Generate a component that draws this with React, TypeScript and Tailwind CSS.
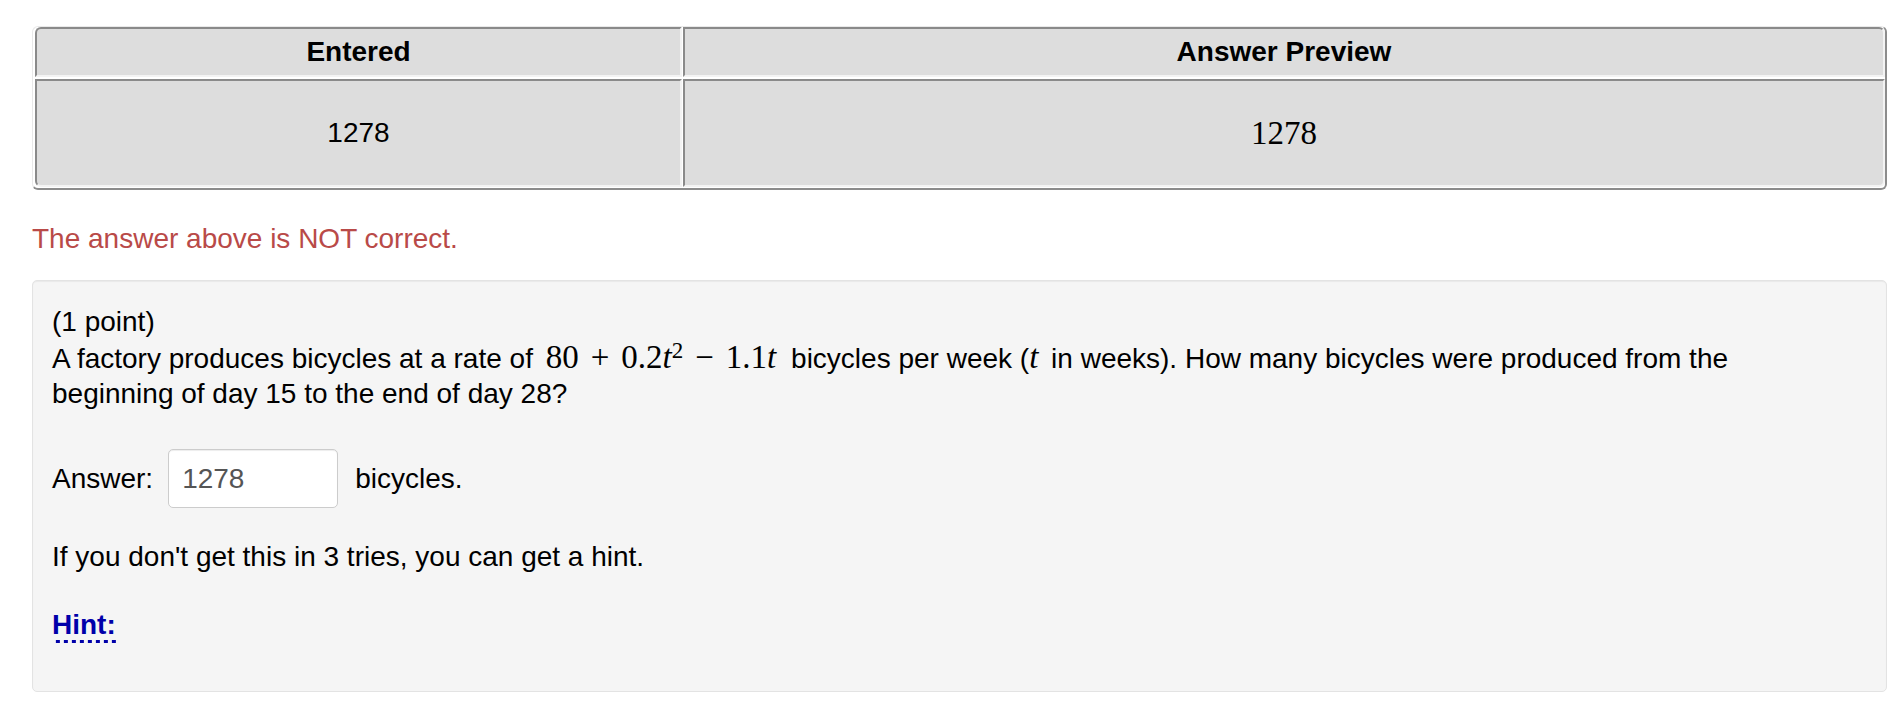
const cell =
  "flex items-center justify-center bg-[#dddddd] border-2 border-t-[#8a8a8a] border-l-[#8a8a8a] border-r-[#f3f3f3] border-b-[#f3f3f3]";

const serif = "font-['Liberation_Serif','Times_New_Roman',serif]";

function AttemptTable() {
  return (
    <div className="grid grid-cols-[647px_1fr] gap-x-[1px] gap-y-[2px] rounded-[6px] border-t border-l border-t-[#e9e9e9] border-l-[#e9e9e9] border-r-2 border-b-2 border-r-[#8c8c8c] border-b-[#8c8c8c] pl-[2px] pb-[1px]">
      <div className={`${cell} h-[50px] rounded-tl-[6px] font-bold`}>Entered</div>
      <div className={`${cell} h-[50px] rounded-tr-[6px] font-bold`}>Answer Preview</div>
      <div className={`${cell} h-[108px] rounded-bl-[6px]`}>1278</div>
      <div className={`${cell} h-[108px] rounded-br-[6px]`}>
        <span className={`${serif} text-[33px]`}>1278</span>
      </div>
    </div>
  );
}

function RateFormula() {
  return (
    <span className={`${serif} ml-[5px] mr-[7px] whitespace-nowrap text-[33px] leading-none`}>
      80
      <span className="mx-[12px]">+</span>
      0.2<i>t</i>
      <span className="relative -top-[10px] text-[23px]">2</span>
      <span className="mx-[12px]">−</span>
      1.1<i>t</i>
    </span>
  );
}

function ProblemBox() {
  return (
    <div className="mt-[23px] rounded-[5px] border border-[#e3e3e3] bg-[#f5f5f5] px-[19px] pt-[21px] pb-[48px] shadow-[inset_0_1px_1px_rgba(0,0,0,0.05)]">
      <div className="leading-[39px]">(1 point)</div>
      <p className="leading-[35px]">
        A factory produces bicycles at a rate of <RateFormula /> bicycles per week (
        <i className={`${serif} mr-[5px] text-[33px] leading-none`}>t</i> in weeks). How many
        bicycles were produced from the
        <br />
        beginning of day 15 to the end of day 28?
      </p>

      <div className="mt-[38px] flex items-baseline">
        <span>Answer:</span>
        <input
          readOnly
          value="1278"
          className="ml-[15px] h-[59px] w-[170px] rounded-[5px] border border-[#cccccc] bg-white pl-[13px] text-[28px] text-[#555555] shadow-[inset_0_1px_1px_rgba(0,0,0,0.075)] outline-none"
        />
        <span className="ml-[17px]">bicycles.</span>
      </div>

      <div className="mt-[31px] leading-[36px]">If you don't get this in 3 tries, you can get a hint.</div>

      <div className="mt-[32px] leading-[36px]">
        <span className="bg-[linear-gradient(to_right,#0000aa_50%,transparent_50%)] bg-[length:8px_3px] bg-bottom bg-repeat-x pb-[3px] font-bold text-[#0000aa]">
          Hint:
        </span>
      </div>
    </div>
  );
}

export default function App() {
  return (
    <div className="min-h-screen bg-white pt-[26px] pl-[32px] pr-[15px] font-['Liberation_Sans',Arial,sans-serif] text-[28px] leading-[36px] text-black">
      <AttemptTable />
      <div className="mt-[31px] text-[#b94a48]">The answer above is NOT correct.</div>
      <ProblemBox />
    </div>
  );
}
